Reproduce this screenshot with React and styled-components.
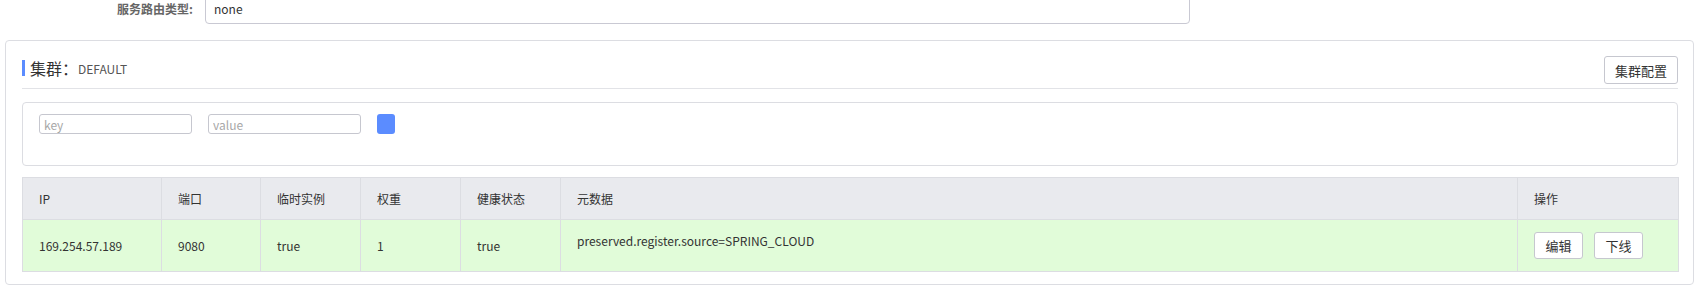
import React from "react";
import styled, { createGlobalStyle } from "styled-components";

const GlobalStyle = createGlobalStyle`
  body {
    margin: 0;
    background: #fff;
    font-family: "Noto Sans CJK SC", "Noto Sans", sans-serif;
    color: #333;
    overflow: hidden;
  }
`;

const columns = [
  { title: "IP", width: 139 },
  { title: "端口", width: 99 },
  { title: "临时实例", width: 100 },
  { title: "权重", width: 100 },
  { title: "健康状态", width: 100 },
  { title: "元数据", width: 957 },
  { title: "操作", width: 161 },
];

const instances = [
  {
    ip: "169.254.57.189",
    port: 9080,
    ephemeral: "true",
    weight: 1,
    healthy: "true",
    metadata: "preserved.register.source=SPRING_CLOUD",
  },
];

export default function App() {
  return (
    <Page>
      <GlobalStyle />
      <FormRow>
        <FormLabel>服务路由类型:</FormLabel>
        <TextInput defaultValue="none" />
      </FormRow>

      <Card>
        <CardHeader>
          <Title>
            集群：<ClusterName>DEFAULT</ClusterName>
          </Title>
          <Button>集群配置</Button>
        </CardHeader>

        <FilterBox>
          <SmallInput placeholder="key" />
          <SmallInput placeholder="value" />
          <BlueButton />
        </FilterBox>

        <Table>
          <colgroup>
            {columns.map((c) => (
              <col key={c.title} style={{ width: c.width }} />
            ))}
          </colgroup>
          <thead>
            <tr>
              {columns.map((c) => (
                <Th key={c.title}>{c.title}</Th>
              ))}
            </tr>
          </thead>
          <tbody>
            {instances.map((row) => (
              <Tr key={row.ip}>
                <Td>{row.ip}</Td>
                <Td>{row.port}</Td>
                <Td>{row.ephemeral}</Td>
                <Td>{row.weight}</Td>
                <Td>{row.healthy}</Td>
                <Td $top>{row.metadata}</Td>
                <Td>
                  <Actions>
                    <SmallButton>编辑</SmallButton>
                    <SmallButton>下线</SmallButton>
                  </Actions>
                </Td>
              </Tr>
            ))}
          </tbody>
        </Table>
      </Card>
    </Page>
  );
}

const Page = styled.div`
  width: 1700px;
`;

const FormRow = styled.div`
  display: flex;
  align-items: center;
  margin-top: -8px;
`;

const FormLabel = styled.label`
  width: 205px;
  text-align: right;
  padding-right: 12px;
  box-sizing: border-box;
  font-size: 12px;
  font-weight: bold;
  color: #666;
`;

const TextInput = styled.input`
  width: 985px;
  height: 32px;
  box-sizing: border-box;
  border: 1px solid #c9c9d3;
  border-radius: 4px;
  padding: 0 8px;
  font: 12px "Noto Sans CJK SC", "Noto Sans", sans-serif;
  color: #333;
  outline: none;
`;

const Card = styled.div`
  margin: 16px 0 0 5px;
  width: 1689px;
  box-sizing: border-box;
  border: 1px solid #dcdde2;
  border-radius: 4px;
  padding: 0 15px 12px 16px;
`;

const CardHeader = styled.div`
  display: flex;
  justify-content: space-between;
  align-items: center;
  padding: 15px 0 4px;
  border-bottom: 1px solid #e2e3e7;
`;

const Title = styled.div`
  display: flex;
  align-items: center;
  border-left: 3px solid #5b8cff;
  padding-left: 5px;
  height: 16px;
  margin-bottom: 4px;
  font-size: 16px;
  color: #333;
`;

const ClusterName = styled.span`
  font-size: 12px;
  color: #555;
`;

const Button = styled.button`
  height: 28px;
  padding: 0 10px;
  background: #fff;
  border: 1px solid #c6c7cf;
  border-radius: 3px;
  font: 13px "Noto Sans CJK SC", sans-serif;
  color: #333;
`;

const FilterBox = styled.div`
  display: flex;
  align-items: flex-start;
  gap: 16px;
  margin-top: 13px;
  height: 64px;
  box-sizing: border-box;
  border: 1px solid #dcdde2;
  border-radius: 4px;
  padding: 11px 16px;
`;

const SmallInput = styled.input`
  width: 153px;
  height: 20px;
  box-sizing: border-box;
  border: 1px solid #c6c7cf;
  border-radius: 3px;
  padding: 0 4px;
  font: 12px "Noto Sans CJK SC", sans-serif;
  outline: none;
  &::placeholder {
    color: #a8a8a8;
  }
`;

const BlueButton = styled.button`
  width: 18px;
  height: 20px;
  border: none;
  border-radius: 3px;
  background: #5b8cff;
  padding: 0;
`;

const Table = styled.table`
  margin-top: 11px;
  width: 1656px;
  border-collapse: collapse;
  table-layout: fixed;
`;

const Th = styled.th`
  height: 41px;
  padding: 0 16px;
  text-align: left;
  font-weight: normal;
  font-size: 12px;
  color: #333;
  background: #e9eaee;
  border: 1px solid #dcdde2;
`;

const Tr = styled.tr`
  background: #e1fcd9;
`;

const Td = styled.td`
  height: 52px;
  box-sizing: border-box;
  padding: ${(p) => (p.$top ? "12px 16px 0" : "0 16px")};
  vertical-align: ${(p) => (p.$top ? "top" : "middle")};
  font-size: 12px;
  color: #333;
  border: 1px solid #dcdde2;
`;

const Actions = styled.div`
  display: flex;
  gap: 11px;
`;

const SmallButton = styled.button`
  width: 49px;
  height: 27px;
  background: #fff;
  border: 1px solid #c6c7cf;
  border-radius: 3px;
  font: 13px "Noto Sans CJK SC", sans-serif;
  color: #333;
  padding: 0;
`;
